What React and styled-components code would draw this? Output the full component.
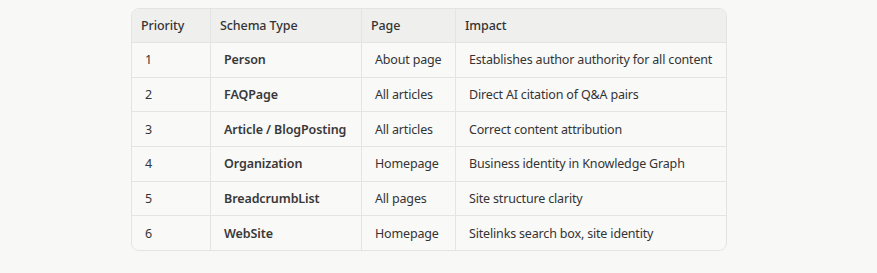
import React from "react";
import styled, { createGlobalStyle } from "styled-components";

const Global = createGlobalStyle`
  html, body { margin: 0; padding: 0; background: #f8f8f7; }
  body { font-family: "Noto Sans", "Open Sans", sans-serif; color: #343434; }
`;

const Page = styled.div`
  padding: 8px 0 0 131px;
`;

const Table = styled.table`
  border-collapse: separate;
  border-spacing: 0;
  width: 596px;
  border: 1px solid #e4e4e3;
  border-radius: 8px;
  overflow: hidden;
  background: #f9f9f8;
  font-size: 12.5px;
  table-layout: fixed;
`;

const Th = styled.th`
  text-align: left;
  font-weight: 500;
  letter-spacing: -0.1px;
  background: #efefee;
  height: 33px;
  padding: 0 9px;
  color: #343434;
  border-left: ${(p) => (p.$first ? "none" : "1px solid #e4e4e3")};
  width: ${(p) => p.$w}px;
  box-sizing: border-box;
`;

const Td = styled.td`
  height: 34.67px;
  padding: 0 8px 0 13px;
  border-top: 1px solid #e4e4e3;
  border-left: ${(p) => (p.$first ? "none" : "1px solid #e4e4e3")};
  font-weight: ${(p) => (p.$bold ? 600 : 400)};
  letter-spacing: ${(p) => (p.$bold ? "-0.1px" : "-0.17px")};
  color: ${(p) => (p.$bold ? "#383838" : "#343434")};
  white-space: nowrap;
  box-sizing: border-box;
`;

const cols = [
  { label: "Priority", w: 78 },
  { label: "Schema Type", w: 151 },
  { label: "Page", w: 94 },
  { label: "Impact", w: 271 },
];

const rows = [
  ["1", "Person", "About page", "Establishes author authority for all content"],
  ["2", "FAQPage", "All articles", "Direct AI citation of Q&A pairs"],
  ["3", "Article / BlogPosting", "All articles", "Correct content attribution"],
  ["4", "Organization", "Homepage", "Business identity in Knowledge Graph"],
  ["5", "BreadcrumbList", "All pages", "Site structure clarity"],
  ["6", "WebSite", "Homepage", "Sitelinks search box, site identity"],
];

export default function App() {
  return (
    <>
      <Global />
      <Page>
        <Table>
          <thead>
            <tr>
              {cols.map((c, i) => (
                <Th key={c.label} $first={i === 0} $w={c.w}>
                  {c.label}
                </Th>
              ))}
            </tr>
          </thead>
          <tbody>
            {rows.map((r) => (
              <tr key={r[0]}>
                {r.map((v, i) => (
                  <Td key={i} $first={i === 0} $bold={i === 1}>
                    {v}
                  </Td>
                ))}
              </tr>
            ))}
          </tbody>
        </Table>
      </Page>
    </>
  );
}
